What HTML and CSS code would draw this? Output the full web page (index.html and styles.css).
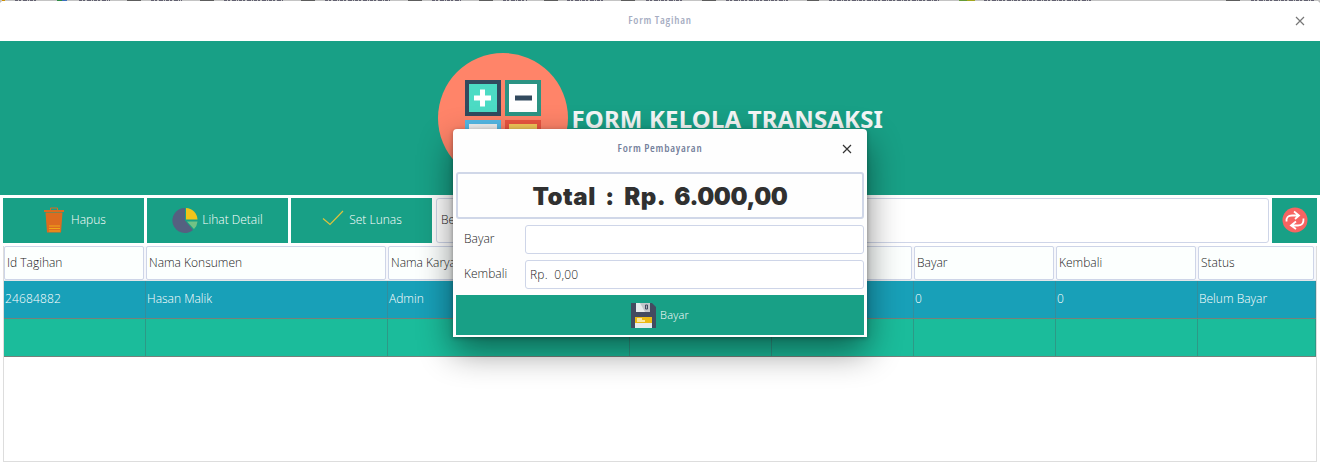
FILE: index.html
```html
<!DOCTYPE html>
<html lang="id">
<head>
<meta charset="utf-8">
<title>Form Tagihan</title>
<link rel="stylesheet" href="styles.css">
</head>
<body>
<div class="window">
  <svg class="strip" width="1320" height="5" viewBox="0 0 1320 5">
    <path d="M0 .5H1320" stroke="#c4c4c4"/>
    <path d="M15 .5H37M79 .5H110M151 .5H182M224 .5H284M325 .5H390M432 .5H462M503 .5H527M567 .5H603M646 .5H683M726 .5H788M829 .5H939M984 .5H1091M1251 .5H1315" stroke="#626070" stroke-dasharray="3 1 2 2 4 1 1 1"/>
    <path d="M127 .5h14M200 .5h14M301 .5h14M408 .5h14M479 .5h14M544 .5h14M621 .5h14M702 .5h14M807 .5h12M1226 .5h14" stroke="#5c5c5c"/>
    <path d="M57 .5h5" stroke="#2d8b43"/><path d="M62 .5h5" stroke="#3c70bd"/><path d="M2 .5h3" stroke="#d09000"/>
    <path d="M959 .5h8" stroke="#659b37"/><path d="M967 .5h8" stroke="#a4a71d"/>
    <path d="M0 1h2L0 3zM1318 1h2v2z" fill="#bbb"/>
  </svg>
  <header class="titlebar"><span class="caption">Form Tagihan</span>
    <svg class="close" width="10" height="10" viewBox="0 0 10 10"><path d="M1 1l8 8M9 1L1 9"/></svg>
  </header>
  <section class="banner">
    <svg class="calc" width="130" height="130" viewBox="0 0 130 130">
      <circle cx="65" cy="65" r="65" fill="#ff8469"/>
      <rect x="27" y="27" width="36" height="36" fill="#324a5e"/><rect x="31" y="31" width="28" height="28" fill="#4cdbc4"/>
      <path d="M36 45h17M44.500 36.500v17" stroke="#fff" stroke-width="5"/>
      <rect x="67" y="27" width="36" height="36" fill="#2b9484"/><rect x="71" y="31" width="28" height="28" fill="#fff"/>
      <path d="M77 45h17" stroke="#324a5e" stroke-width="5"/>
      <rect x="27" y="67" width="36" height="36" fill="#54b9e6"/><rect x="31" y="71" width="28" height="28" fill="#f1f1f1"/>
      <rect x="67" y="67" width="36" height="36" fill="#ea5440"/><rect x="71" y="71" width="28" height="28" fill="#f4c85a"/>
    </svg>
    <h1 class="heading">FORM KELOLA TRANSAKSI</h1>
  </section>
  <div class="toolbar">
    <button class="btn"><svg width="26" height="26" viewBox="0 0 26 26"><path d="M3 3h20v2H3zM4.500 5.500h17L20 25.500H6z" fill="#dd6b20"/><path d="M9.500 3V1h7v2" fill="none" stroke="#dd6b20"/><path d="M8 19h11M8 21.500h11M8 24h11" stroke="#f0a818"/></svg><span>Hapus</span></button>
    <button class="btn detail"><svg width="26" height="26" viewBox="0 0 26 26"><path d="M13 1A12.500 12.500 0 1 0 21 23L13 13.500z" fill="#556080"/><path d="M14 1a12 12 0 0 1 11.500 11.500H14z" fill="#efc41a"/><path d="M15 14.500h10.500a12 12 0 0 1-3.500 7.500z" fill="#71c285"/></svg><span>Lihat Detail</span></button>
    <button class="btn lunas"><svg width="24" height="26" viewBox="0 0 24 26"><path d="M2 11.500l7 6L22 4" fill="none" stroke="#dfc33c" stroke-width="1.200"/></svg><span>Set Lunas</span></button>
    <div class="search">Belum Bayar</div>
    <button class="refresh"><svg width="26" height="26" viewBox="0 0 26 26"><circle cx="13" cy="13" r="12.500" fill="#f76462"/><g fill="none" stroke="#fff" stroke-width="1.800"><path d="M4.500 14.500Q4 8.500 10 8.500H17M12 4.500L17 8.500 13 12M21.500 11.500Q22 18.500 16 18.500H9M14 14.500L9 18.500 14 22"/></g></svg></button>
  </div>
  <div class="table">
    <div class="grid head"><div>Id Tagihan</div><div>Nama Konsumen</div><div>Nama Karyawan</div><div></div><div></div><div>Bayar</div><div>Kembali</div><div>Status</div></div>
    <div class="grid row selected"><div class="id">24684882</div><div>Hasan Malik</div><div>Admin</div><div></div><div></div><div>0</div><div>0</div><div>Belum Bayar</div></div>
    <div class="grid row"><div></div><div></div><div></div><div></div><div></div><div></div><div></div><div></div></div>
  </div>
  <div class="dialog">
    <header class="dialog-title"><span class="caption">Form Pembayaran</span>
      <svg class="close" width="10" height="10" viewBox="0 0 10 10"><path d="M1 1l8 8M9 1L1 9"/></svg></header>
    <div class="total"><span>Total : Rp. <span class="amount">6.000,00</span></span></div>
    <div class="field"><label>Bayar</label><div class="input"></div></div>
    <div class="field"><label>Kembali</label><div class="input">Rp.&nbsp; 0,00</div></div>
    <button class="pay"><svg width="25" height="25" viewBox="0 0 25 25"><path d="M0 0h21l4 4v21H0z" fill="#434b60"/><path d="M5 0h14v9H5z" fill="#e7eced"/><path d="M9 0h10v9h-5z" fill="#c3c7cb"/><path d="M14.500 2h2v4h-2z" fill="#aeb2bc" stroke="#434b60"/><path d="M4 14h17v6H4z" fill="#ebba16"/><path d="M4 20h17v5H4z" fill="#e7eced"/><path d="M6 15h5v2h3v2H6z" fill="#fae7a0"/></svg><span>Bayar</span></button>
  </div>
</div>
</body>
</html>
```
FILE: styles.css
```css
* { box-sizing: border-box; }
body { margin: 0; font: 350 12px/16px "Open Sans", "Noto Sans", sans-serif; color: #222; background: #fff; }
button { border: 0; padding: 0; font: inherit; color: #fff; background: #18a086; display: flex; align-items: center; justify-content: center; }
.window { position: relative; width: 1320px; height: 465px; overflow: hidden; display: flex; flex-direction: column; }
.strip { position: absolute; left: 0; top: 0; z-index: 2; }
.titlebar { height: 41px; flex: none; display: flex; justify-content: center; position: relative; padding-top: 12px; color: #a6adc2; }
.caption { font-size: 11px; font-weight: 600; font-stretch: 75%; letter-spacing: .75px; }
.close { position: absolute; right: 15px; top: 16px; fill: none; stroke: #777; stroke-width: 1.2; }
.banner { height: 154px; flex: none; background: #18a086; display: flex; justify-content: center; gap: 4px; padding-top: 12px; }
.calc { flex: none; }
.heading { margin: 49px 0 0; width: 311px; white-space: nowrap; font: 700 24px/34px "Noto Sans", sans-serif; letter-spacing: .15px; color: #f5f7f7; }
.toolbar { height: 45px; flex: none; margin: 3px 3px 0; display: flex; gap: 3px; }
.btn { width: 141px; gap: 4px; padding-bottom: 1px; }
.search { flex: 1; margin-left: 1px; border: 1px solid #ced5e8; border-radius: 3px; padding: 13px 4px; }
.refresh { width: 45px; padding-bottom: 1px; }
.table { height: 216px; margin: 3px 3px 0; border: solid #ddd; border-width: 0 1px 1px; background: #fff; }
.grid { display: grid; grid-template-columns: 142px 242px 242px 142px 142px 142px 142px 1fr; }
.head { height: 35px; background: #f6f7fb; border-bottom: 1px solid #e4e4e8; }
.head > div { height: 34px; margin-right: 2px; border: 1px solid #ced5e8; border-radius: 2px; background: #fcfffe; padding: 8px 2px; }
.row { height: 38px; color: #fff; background: #1bbc9b; border-bottom: 1px solid #75817b; }
.row > div { padding: 10px 1px; border-right: 1px solid #2d9986; }
.selected { background: #18a0b8; }
.selected > div { border-right-color: #328e9e; }
.row > .id { letter-spacing: .15px; }
.dialog { position: absolute; left: 453px; top: 129px; width: 414px; height: 208px; background: #fefefe; border-radius: 4px 4px 0 0; padding: 0 3px 2px; box-shadow: 0 14px 34px rgba(0,0,0,.48), 0 1px 4px rgba(0,0,0,.3); display: flex; flex-direction: column; gap: 6px; }
.dialog-title { height: 37px; display: flex; justify-content: center; padding-top: 11px; position: relative; color: #74809b; }
.dialog .close { right: 12px; top: 15px; stroke: #333; }
.total { height: 47px; border: 2px solid #d0d7e8; border-radius: 3px; display: flex; align-items: center; justify-content: center; font: 900 24px/30px Inter, sans-serif; letter-spacing: .5px; word-spacing: 4.2px; padding-top: 2px; color: #303030; white-space: nowrap; }
.amount { letter-spacing: -.4px; }
.field { height: 29px; display: grid; grid-template-columns: 69px 1fr; line-height: 27px; }
.field label { padding-left: 8px; }
.input { border: 1px solid #ced5e8; border-radius: 3px; padding-left: 4px; background: #fff; letter-spacing: .2px; }
.pay { height: 40px; gap: 4px; font-size: 11px; letter-spacing: .2px; }
```
